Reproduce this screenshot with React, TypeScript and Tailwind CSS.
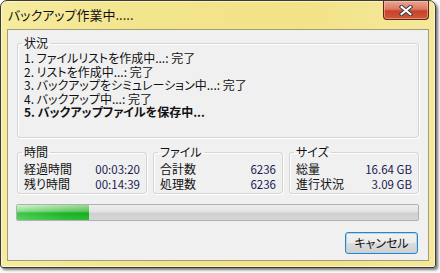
const font = "font-['Noto_Sans_CJK_JP','Noto_Sans_CJK_SC',sans-serif] [font-feature-settings:'palt']";

const steps = [
  { n: "1.", text: "ファイルリストを作成中...", done: true },
  { n: "2.", text: "リストを作成中...", done: true },
  { n: "3.", text: "バックアップをシミュレーション中...", done: true },
  { n: "4.", text: "バックアップ中...", done: true },
  { n: "5.", text: "バックアップファイルを保存中...", done: false },
];

const groups = [
  { title: "時間", rows: [["経過時間", "00:03:20"], ["残り時間", "00:14:39"]] },
  { title: "ファイル", rows: [["合計数", "6236"], ["処理数", "6236"]] },
  { title: "サイズ", rows: [["総量", "16.64 GB"], ["進行状況", "3.09 GB"]] },
];

const groupBox =
  "rounded-[3px] border border-[#d5d5d5] shadow-[inset_1px_1px_0_#ffffff,1px_1px_0_#ffffff]";

function CloseButton() {
  return (
    <div className="flex h-[19px] w-[46px] items-center justify-center rounded-b-[4px] border border-t-0 border-[#5b2519] bg-[linear-gradient(#eaa695,#dc7a62_45%,#c7422b_55%,#d2573a)] shadow-[inset_0_0_0_1px_rgba(255,210,190,0.45)]">
      <svg width="14" height="11" viewBox="0 0 14 11">
        <path d="M2.5 1.8 L11.5 9.2 M11.5 1.8 L2.5 9.2" stroke="#3d3d46" strokeWidth="4" strokeLinecap="square" />
        <path d="M2.5 1.8 L11.5 9.2 M11.5 1.8 L2.5 9.2" stroke="#ffffff" strokeWidth="2" strokeLinecap="square" />
      </svg>
    </div>
  );
}

export default function App() {
  return (
    <div className={`h-[273px] w-[440px] bg-white ${font}`}>
      <div className="flex h-[268px] w-[436px] flex-col rounded-t-[7px] rounded-b-[3px] border border-[#3a3a36] bg-[linear-gradient(90deg,#f6ec9f,#f3e58d_30%,#f2e388_70%,#f5e89a)] shadow-[2px_2px_3px_rgba(0,0,0,0.55),inset_0_0_0_1px_rgba(255,255,240,0.55)]">
        <div className="flex h-[28px] shrink-0 items-start justify-between pl-[7px] pr-[6px]">
          <span className="mt-[5px] text-[13px] leading-[17px] text-[#111]">バックアップ作業中.....</span>
          <CloseButton />
        </div>

        <div className="mx-[6px] mb-[6px] flex flex-1 flex-col border border-[#a29c7a] bg-[#f0f0f0] px-[9px] text-[12px] text-[#111]">
          <fieldset className={`mt-[6px] h-[102px] pl-[4px] ${groupBox}`}>
            <legend className="px-[2px] leading-[14px]">状況</legend>
            <div className="pl-[2px] pt-[1px] leading-[13.5px]">
              {steps.map((s) => (
                <div key={s.n} className={s.done ? "" : "font-bold"}>
                  {s.n} {s.text}
                  {s.done ? ": 完了" : ""}
                </div>
              ))}
            </div>
          </fieldset>

          <div className="mt-[7px] grid grid-cols-3 gap-[6px]">
            {groups.map((g) => (
              <fieldset key={g.title} className={`h-[49px] pl-[4px] pr-[6px] ${groupBox}`}>
                <legend className="px-[2px] leading-[14px]">{g.title}</legend>
                <div className="pl-[2px] pt-[3px] leading-[14.5px]">
                  {g.rows.map(([label, value]) => (
                    <div key={label} className="flex justify-between">
                      <span>{label}</span>
                      <span className="text-[11.5px] text-[#1a1a50]">{value}</span>
                    </div>
                  ))}
                </div>
              </fieldset>
            ))}
          </div>

          <div className="-ml-[1px] mt-[10px] h-[17px] overflow-hidden rounded-[2px] border border-[#b0b0b0] bg-[linear-gradient(#eeeeee,#e2e2e2_45%,#cfcfcf_55%,#d6d6d6)]">
            <div className="h-full w-[72px] bg-[linear-gradient(#c9f2c6,#7bdc7b_40%,#1fbb2a_55%,#3ccb45)]">
              <div className="h-full w-full bg-[linear-gradient(90deg,rgba(255,255,255,0.15),rgba(0,120,0,0.15)_70%,rgba(0,140,0,0.25))]" />
            </div>
          </div>

          <div className="mt-[11px] flex justify-end pr-[1px]">
            <button className="h-[22px] w-[73px] rounded-[3px] border border-[#3c7fb1] bg-[linear-gradient(#f2f2f2,#ebebeb_50%,#dddddd_50%,#cfcfcf)] text-[12px] leading-[18px] text-[#111] shadow-[inset_0_0_0_1px_#a6d9f6]">
              キャンセル
            </button>
          </div>
        </div>
      </div>
    </div>
  );
}
